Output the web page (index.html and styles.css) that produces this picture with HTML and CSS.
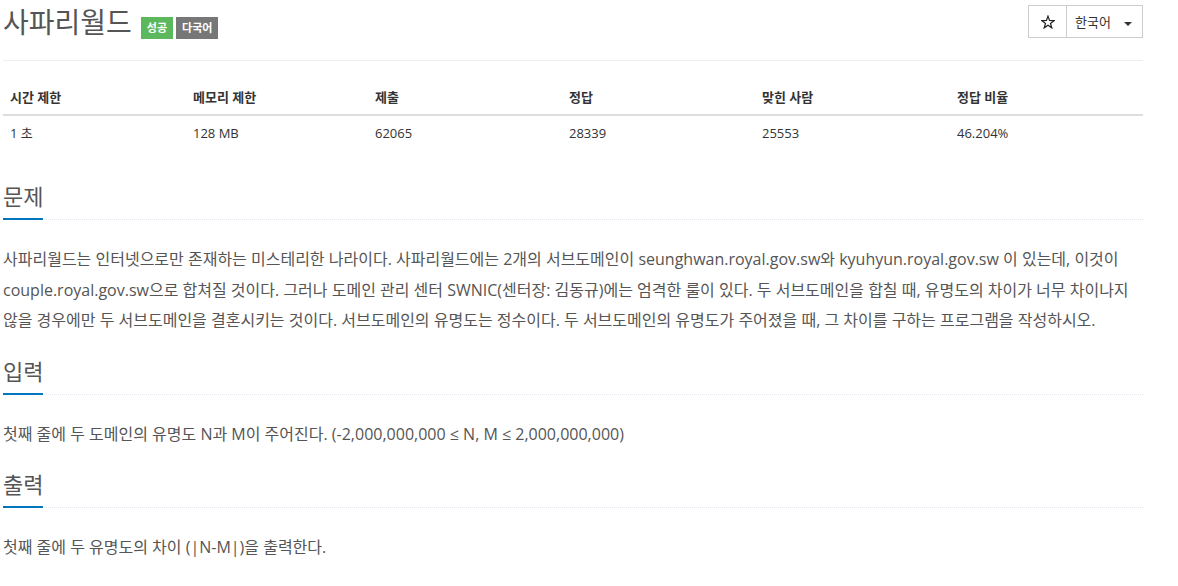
FILE: index.html
```html
<!DOCTYPE html>
<html lang="ko">
<head>
    <meta charset="UTF-8">
    <title>사파리월드</title>
    <link rel="stylesheet" href="styles.css">
</head>
<body>
<div class="container">
    <div class="page-header">
        <h1 class="title">사파리월드<span class="label label-success">성공</span><span class="label label-gray">다국어</span></h1>
        <div class="btn-group">
            <button class="btn star">
                <svg width="14" height="14" viewBox="0 0 14 14"><polygon points="7,1.1 8.53,5.5 13.18,5.59 9.47,8.4 10.82,12.86 7,10.2 3.18,12.86 4.53,8.4 0.82,5.59 5.47,5.5" fill="none" stroke="#222" stroke-width="1.2" stroke-linejoin="miter"/></svg>
            </button>
            <button class="btn lang">한국어 <span class="caret"></span></button>
        </div>
    </div>

    <table class="info">
        <colgroup>
            <col class="c1"><col class="c2"><col class="c3"><col class="c4"><col class="c5"><col class="c6">
        </colgroup>
        <thead>
            <tr><th>시간 제한</th><th>메모리 제한</th><th>제출</th><th>정답</th><th>맞힌 사람</th><th>정답 비율</th></tr>
        </thead>
        <tbody>
            <tr><td>1 초</td><td>128 MB</td><td>62065</td><td>28339</td><td>25553</td><td>46.204%</td></tr>
        </tbody>
    </table>

    <section class="problem-section">
        <div class="headline"><h2>문제</h2></div>
        <p class="problem-text">사파리월드는 인터넷으로만 존재하는 미스테리한 나라이다. 사파리월드에는 2개의 서브도메인이 seunghwan.royal.gov.sw와 kyuhyun.royal.gov.sw 이 있는데, 이것이 couple.royal.gov.sw으로 합쳐질 것이다. 그러나 도메인 관리 센터 SWNIC(센터장: 김동규)에는 엄격한 룰이 있다. 두 서브도메인을 합칠 때, 유명도의 차이가 너무 차이나지 않을 경우에만 두 서브도메인을 결혼시키는 것이다. 서브도메인의 유명도는 정수이다. 두 서브도메인의 유명도가 주어졌을 때, 그 차이를 구하는 프로그램을 작성하시오.</p>
    </section>

    <section class="problem-section">
        <div class="headline"><h2>입력</h2></div>
        <p class="problem-text">첫째 줄에 두 도메인의 유명도 N과 M이 주어진다. (-2,000,000,000 ≤ N, M ≤ 2,000,000,000)</p>
    </section>

    <section class="problem-section">
        <div class="headline"><h2>출력</h2></div>
        <p class="problem-text">첫째 줄에 두 유명도의 차이 (|N-M|)을 출력한다.</p>
    </section>
</div>
</body>
</html>
```

FILE: styles.css
```css
body {
    margin: 0;
    font-family: "Open Sans", "Noto Sans CJK KR", sans-serif;
    color: #555;
    background: #fff;
}
.container {
    width: 1140px;
    margin-left: 3px;
}

/* 제목 영역 */
.page-header {
    display: flex;
    justify-content: space-between;
    align-items: flex-start;
    padding: 5px 0 21px;
    border-bottom: 1px solid #eee;
}
.title {
    margin: 0;
    font-size: 28px;
    font-weight: normal;
    line-height: 34px;
    color: #555;
}
.label {
    display: inline-block;
    vertical-align: bottom;
    margin-left: 3px;
    padding: 0 6px;
    font-size: 11px;
    font-weight: bold;
    line-height: 22px;
    color: #fff;
}
.label-success {
    margin-left: 9px;
    background: #5cb85c;
}
.label-gray {
    background: #777;
}
.btn-group {
    display: flex;
    border: 1px solid #ccc;
}
.btn {
    height: 31px;
    border: 0;
    background: #fff;
    color: #333;
    font-family: "Open Sans", "Noto Sans CJK KR", sans-serif;
    cursor: pointer;
}
.star {
    width: 38px;
    padding: 0;
    border-right: 1px solid #ccc;
}
.star svg {
    display: block;
    margin: 0 auto;
}
.lang {
    width: 75px;
    padding: 0 0 0 8px;
    text-align: left;
    font-size: 13px;
}
.caret {
    display: inline-block;
    margin-left: 10px;
    vertical-align: middle;
    border-top: 4px solid #333;
    border-left: 4px solid transparent;
    border-right: 4px solid transparent;
}

/* 제한 표 */
.info {
    width: 100%;
    table-layout: fixed;
    border-collapse: collapse;
    margin: 19px 0 33px;
    font-size: 13px;
    color: #333;
}
.c1 { width: 183px; }
.c2 { width: 182px; }
.c3 { width: 194px; }
.c4 { width: 193px; }
.c5 { width: 195px; }
.c6 { width: 193px; }
.info th {
    text-align: left;
    font-weight: bold;
    padding: 8px 7px;
    line-height: 18px;
    border-bottom: 2px solid #ddd;
}
.info td {
    padding: 8px 7px;
    line-height: 18px;
}

/* 본문 */
.headline {
    margin: 10px 0 24px;
    border-bottom: 1px dotted #e4e9f0;
}
.headline h2 {
    display: inline-block;
    margin: 0 0 -1px;
    padding-bottom: 9px;
    border-bottom: 2px solid #0076c0;
    font-size: 22px;
    font-weight: normal;
    line-height: 26px;
    color: #555;
}
.problem-text {
    margin: 0 0 22px;
    font-size: 16px;
    line-height: 30.5px;
    word-break: keep-all;
}
```
